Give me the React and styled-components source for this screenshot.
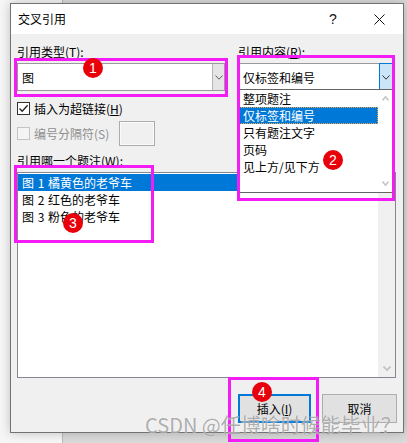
import React from "react";
import styled, { createGlobalStyle } from "styled-components";

const GlobalStyle = createGlobalStyle`
  html, body { margin: 0; padding: 0; }
  body {
    font-family: "Noto Sans CJK SC", "Microsoft YaHei", sans-serif;
    font-size: 12px;
    color: #000;
  }
  * { box-sizing: border-box; }
`;

const Desktop = styled.div`
  position: relative;
  width: 407px;
  height: 443px;
  overflow: hidden;
  padding: 3px 0 0 10px;
  background: linear-gradient(to right, #f6f6f6 0 62px, #b9b9b9 62px 63px, #dadada 63px);
`;

const Window = styled.div`
  width: 394px;
  height: 430px;
  border: 1px solid #727272;
  background: #f0f0f0;
  box-shadow: 0 0 10px rgba(0, 0, 0, 0.22);
  display: flex;
  flex-direction: column;
`;

const TitleBar = styled.div`
  height: 30px;
  background: #fff;
  display: flex;
  align-items: center;
  padding-left: 7px;
`;

const Title = styled.span`
  font-size: 12px;
  line-height: 16px;
`;

const TitleButton = styled.div`
  width: ${(p) => p.$w}px;
  height: 30px;
  display: flex;
  align-items: center;
  justify-content: center;
  font-family: "Liberation Sans", Arial, sans-serif;
  font-size: 14px;
  color: #111;
  &:first-of-type { margin-left: auto; }
`;

const Body = styled.div`
  flex: 1;
  padding: 9px 7px 0 6px;
  display: flex;
  flex-direction: column;
`;

const TopGrid = styled.div`
  display: grid;
  grid-template-columns: 208px 155px;
  column-gap: 13px;
`;

const Column = styled.div`
  display: flex;
  flex-direction: column;
`;

const Label = styled.div`
  height: 17px;
  line-height: 17px;
  margin-top: ${(p) => p.$mt || 0}px;
  white-space: nowrap;
`;

const Combo = styled.div`
  position: relative;
  margin-top: 3px;
  height: 28px;
  border: 1px solid #9a9a9a;
  background: #fff;
  display: flex;
  align-items: stretch;
`;

const ComboText = styled.div`
  flex: 1;
  padding-left: 4px;
  display: flex;
  align-items: center;
  line-height: 17px;
`;

const ComboButton = styled.div`
  width: ${(p) => (p.$focused ? 14 : 12)}px;
  display: flex;
  align-items: center;
  justify-content: center;
  background: ${(p) => (p.$focused ? "#cce4f7" : "#e5e5e5")};
  border: ${(p) => (p.$focused ? "1px solid #0078d7" : "none")};
  border-left: 1px solid ${(p) => (p.$focused ? "#0078d7" : "#b5b5b5")};
  margin: ${(p) => (p.$focused ? "-1px -1px -1px 0" : "0")};
`;

const Dropdown = styled.div`
  position: absolute;
  top: 100%;
  left: -1px;
  right: -1px;
  margin-top: -1px;
  height: 104px;
  border: 1px solid #646464;
  background: #fff;
  display: flex;
  z-index: 2;
`;

const Items = styled.div`
  flex: 1;
  padding-top: ${(p) => p.$pt || 0}px;
  display: flex;
  flex-direction: column;
`;

const Item = styled.div`
  height: 17px;
  line-height: 15px;
  padding-left: 3px;
  white-space: nowrap;
  word-spacing: ${(p) => p.$ws || 0}px;
  background: ${(p) => (p.$selected ? "#0078d7" : "transparent")};
  color: ${(p) => (p.$selected ? "#fff" : "#000")};
  border: 1px ${(p) => (p.$focus ? "dotted #f0a848" : "solid transparent")};
`;

const ScrollBar = styled.div`
  width: ${(p) => p.$w}px;
  background: ${(p) => p.$bg};
  display: flex;
  flex-direction: column;
  justify-content: ${(p) => (p.$downOnly ? "flex-end" : "space-between")};
  align-items: center;
  padding: ${(p) => p.$pad};
`;

const CheckRow = styled.div`
  margin-top: ${(p) => p.$mt}px;
  height: ${(p) => p.$h}px;
  display: flex;
  align-items: center;
  color: ${(p) => (p.$disabled ? "#8f8f8f" : "#000")};
`;

const CheckBox = styled.div`
  width: 13px;
  height: 13px;
  border: 1px solid ${(p) => (p.$disabled ? "#c4c4c4" : "#333")};
  background: ${(p) => (p.$disabled ? "#f4f4f4" : "#fff")};
  display: flex;
  align-items: center;
  justify-content: center;
`;

const CheckLabel = styled.span`
  margin-left: 4px;
  line-height: 17px;
  white-space: nowrap;
`;

const SmallInput = styled.div`
  margin-left: 10px;
  width: 36px;
  height: 25px;
  border: 1px solid #acacac;
  box-shadow: inset 0 0 0 1px #fafafa;
  background: #f0f0f0;
`;

const ListBox = styled.div`
  margin-top: 3px;
  height: 206px;
  border: 1px solid #828790;
  background: #fff;
  display: flex;
`;

const ButtonRow = styled.div`
  margin-top: 16px;
  margin-right: -1px;
  display: flex;
  justify-content: flex-end;
  gap: 11px;
`;

const DialogButton = styled.div`
  width: ${(p) => p.$w}px;
  height: 29px;
  background: #e1e1e1;
  border: ${(p) => (p.$primary ? "2px solid #0078d7" : "1px solid #adadad")};
  display: flex;
  align-items: center;
  justify-content: center;
  line-height: 17px;
`;

const Mark = styled.div`
  position: absolute;
  left: ${(p) => p.$x}px;
  top: ${(p) => p.$y}px;
  width: ${(p) => p.$w}px;
  height: ${(p) => p.$h}px;
  border: 3px solid #f41cf4;
  pointer-events: none;
  z-index: 5;
`;

const Badge = styled.div`
  position: absolute;
  left: ${(p) => p.$x - 10}px;
  top: ${(p) => p.$y - 10}px;
  width: 20px;
  height: 20px;
  border-radius: 50%;
  background: #e8000b;
  color: #fff;
  font-family: "Liberation Sans", Arial, sans-serif;
  font-size: 14px;
  line-height: 20px;
  text-align: center;
  z-index: 6;
`;

const Watermark = styled.div`
  position: absolute;
  left: 145px;
  top: 413px;
  font-size: 20px;
  line-height: 24px;
  white-space: nowrap;
  color: rgba(120, 120, 120, 0.6);
  text-shadow: 0 0 1px rgba(255, 255, 255, 0.9);
  z-index: 7;
`;

const Chevron = ({ up, color = "#555", w = 8, h = 5, sw = 1 }) => (
  <svg width={w} height={h} viewBox={`0 0 ${w} ${h}`}>
    <polyline
      points={
        up
          ? `0.5,${h - 0.5} ${w / 2},0.8 ${w - 0.5},${h - 0.5}`
          : `0.5,0.5 ${w / 2},${h - 0.8} ${w - 0.5},0.5`
      }
      fill="none"
      stroke={color}
      strokeWidth={sw}
    />
  </svg>
);

const CloseIcon = () => (
  <svg width="11" height="11" viewBox="0 0 11 11">
    <path d="M0.5 0.5 L10.5 10.5 M10.5 0.5 L0.5 10.5" stroke="#111" strokeWidth="1" fill="none" />
  </svg>
);

const CheckMark = () => (
  <svg width="11" height="11" viewBox="0 0 11 11">
    <polyline points="1.5,5.5 4.2,8.3 9.6,2.2" fill="none" stroke="#222" strokeWidth="1.3" />
  </svg>
);

const contentOptions = ["整项题注", "仅标签和编号", "只有题注文字", "页码", "见上方/见下方"];
const captions = ["图 1 橘黄色的老爷车", "图 2 红色的老爷车", "图 3 粉色的老爷车"];

export default function App() {
  return (
    <>
      <GlobalStyle />
      <Desktop>
        <Window>
          <TitleBar>
            <Title>交叉引用</Title>
            <TitleButton $w={44}>?</TitleButton>
            <TitleButton $w={48}>
              <CloseIcon />
            </TitleButton>
          </TitleBar>
          <Body>
            <TopGrid>
              <Column>
                <Label>引用类型(<u>T</u>):</Label>
                <Combo>
                  <ComboText>图</ComboText>
                  <ComboButton>
                    <Chevron color="#606060" w={8} h={5} />
                  </ComboButton>
                </Combo>
                <CheckRow $mt={9} $h={17}>
                  <CheckBox>
                    <CheckMark />
                  </CheckBox>
                  <CheckLabel>插入为超链接(<u>H</u>)</CheckLabel>
                </CheckRow>
                <CheckRow $mt={4} $h={25} $disabled>
                  <CheckBox $disabled />
                  <CheckLabel>编号分隔符(S)</CheckLabel>
                  <SmallInput />
                </CheckRow>
              </Column>
              <Column>
                <Label>引用内容(<u>R</u>):</Label>
                <Combo>
                  <ComboText>仅标签和编号</ComboText>
                  <ComboButton $focused>
                    <Chevron color="#333" w={8} h={5} />
                  </ComboButton>
                  <Dropdown>
                    <Items>
                      {contentOptions.map((o, i) => (
                        <Item key={o} $selected={i === 1} $focus={i === 1}>
                          {o}
                        </Item>
                      ))}
                    </Items>
                    <ScrollBar $w={14} $bg="#fff" $pad="6px 0 6px 0">
                      <Chevron up color="#c6c6c6" w={7} h={5} sw={1.6} />
                      <Chevron color="#c6c6c6" w={7} h={5} sw={1.6} />
                    </ScrollBar>
                  </Dropdown>
                </Combo>
              </Column>
            </TopGrid>
            <Label $mt={6}>引用哪一个题注(<u>W</u>):</Label>
            <ListBox>
              <Items $pt={1}>
                {captions.map((c, i) => (
                  <Item key={c} $selected={i === 0} $ws={1}>
                    {c}
                  </Item>
                ))}
              </Items>
              <ScrollBar $w={17} $bg="#f0f0f0" $pad="0 0 6px 0" $downOnly>
                <Chevron color="#c2c2c2" w={8} h={5} sw={1.7} />
              </ScrollBar>
            </ListBox>
            <ButtonRow>
              <DialogButton $w={73} $primary>
                插入(<u>I</u>)
              </DialogButton>
              <DialogButton $w={75}>取消</DialogButton>
            </ButtonRow>
          </Body>
        </Window>

        <Mark $x={14} $y={58} $w={214} $h={39} />
        <Badge $x={93} $y={68}>1</Badge>
        <Mark $x={237} $y={55} $w={158} $h={146} />
        <Badge $x={333} $y={160}>2</Badge>
        <Mark $x={14} $y={165} $w={140} $h={78} />
        <Badge $x={73} $y={223}>3</Badge>
        <Mark $x={228} $y={377} $w={91} $h={65} />
        <Badge $x={262} $y={392}>4</Badge>
        <Watermark>CSDN @任博啥时候能毕业？</Watermark>
      </Desktop>
    </>
  );
}
